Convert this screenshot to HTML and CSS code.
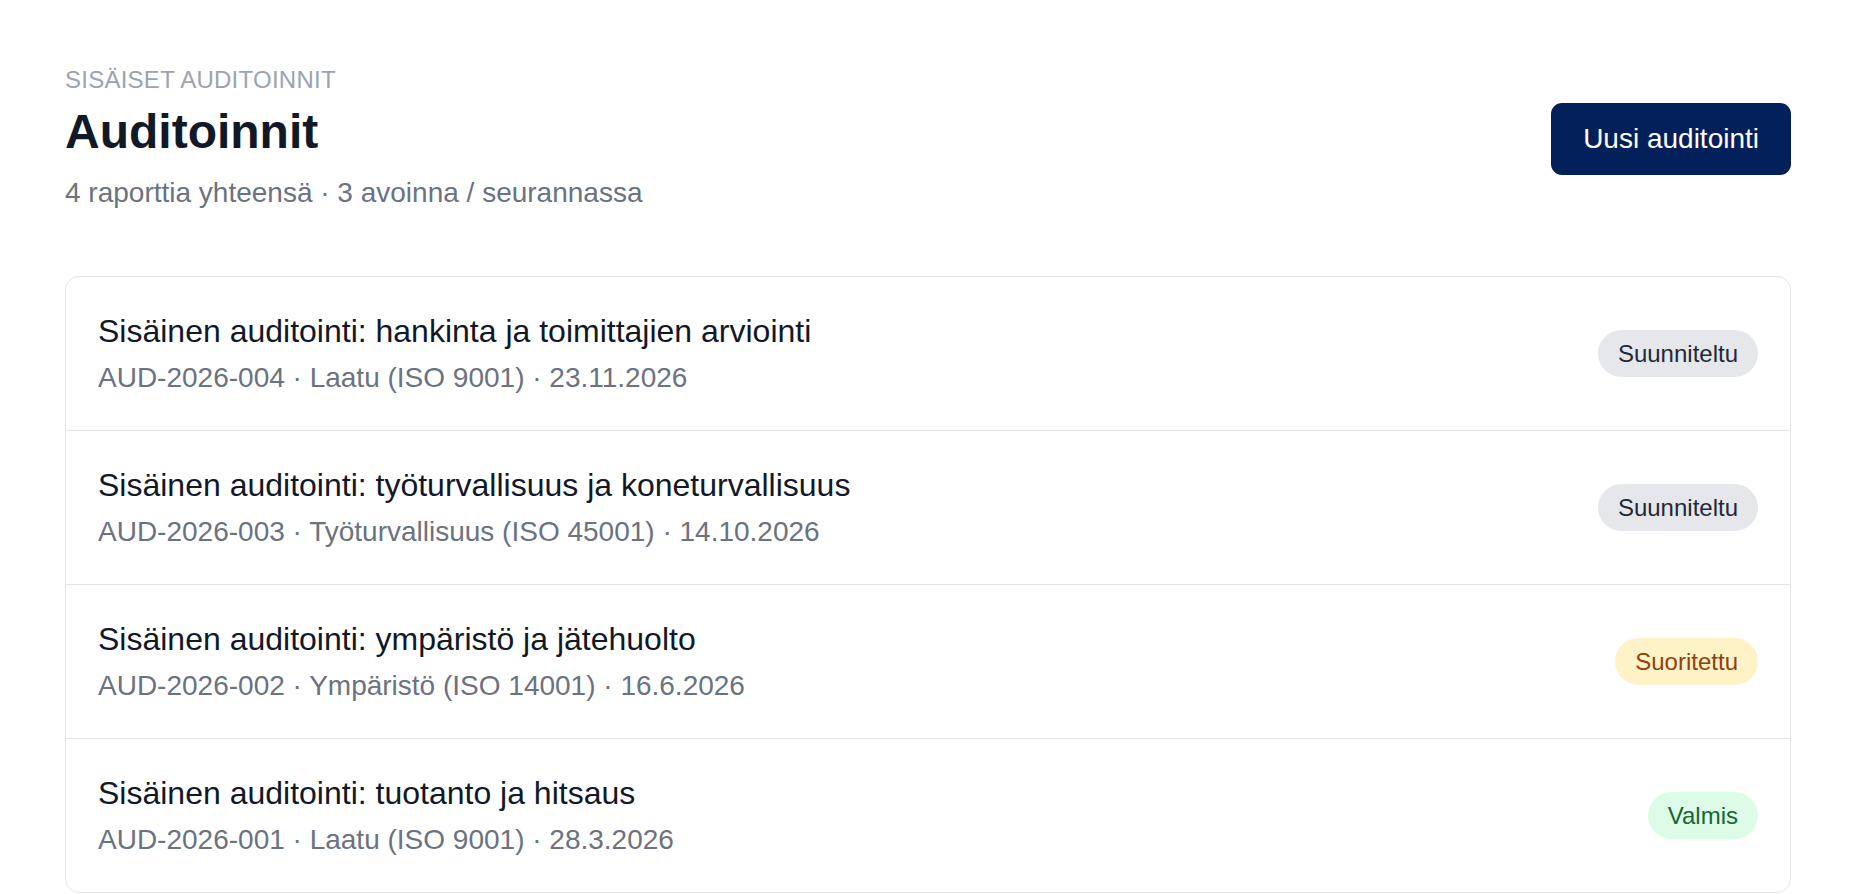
FILE: index.html
```html
<!DOCTYPE html>
<html lang="fi">
<head>
    <meta charset="UTF-8">
    <meta name="viewport" content="width=device-width, initial-scale=1.0">
    <title>Auditoinnit</title>
    <link rel="stylesheet" href="styles.css">
</head>
<body>
    <main class="page">
        <header class="page-header">
            <div class="heading">
                <p class="eyebrow">Sisäiset auditoinnit</p>
                <h1>Auditoinnit</h1>
                <p class="summary">4 raporttia yhteensä · 3 avoinna / seurannassa</p>
            </div>
            <button class="btn-primary" type="button">Uusi auditointi</button>
        </header>

        <ul class="audit-list">
            <li class="audit-item">
                <div class="audit-text">
                    <div class="audit-title">Sisäinen auditointi: hankinta ja toimittajien arviointi</div>
                    <div class="audit-meta">AUD-2026-004 · Laatu (ISO 9001) · 23.11.2026</div>
                </div>
                <span class="badge badge-planned">Suunniteltu</span>
            </li>
            <li class="audit-item">
                <div class="audit-text">
                    <div class="audit-title">Sisäinen auditointi: työturvallisuus ja koneturvallisuus</div>
                    <div class="audit-meta">AUD-2026-003 · Työturvallisuus (ISO 45001) · 14.10.2026</div>
                </div>
                <span class="badge badge-planned">Suunniteltu</span>
            </li>
            <li class="audit-item">
                <div class="audit-text">
                    <div class="audit-title">Sisäinen auditointi: ympäristö ja jätehuolto</div>
                    <div class="audit-meta">AUD-2026-002 · Ympäristö (ISO 14001) · 16.6.2026</div>
                </div>
                <span class="badge badge-done">Suoritettu</span>
            </li>
            <li class="audit-item">
                <div class="audit-text">
                    <div class="audit-title">Sisäinen auditointi: tuotanto ja hitsaus</div>
                    <div class="audit-meta">AUD-2026-001 · Laatu (ISO 9001) · 28.3.2026</div>
                </div>
                <span class="badge badge-ready">Valmis</span>
            </li>
        </ul>
    </main>
</body>
</html>
```

FILE: styles.css
```css
/* Global styles */
* {
    margin: 0;
    padding: 0;
    box-sizing: border-box;
}

body {
    background: #fff;
    color: #111827;
    font-family: "Liberation Sans", Arial, sans-serif;
}

.page {
    padding: 64px 65px 40px;
}

/* Header */
.page-header {
    display: flex;
    justify-content: space-between;
    align-items: center;
    margin-bottom: 63px;
}

.eyebrow {
    font-size: 24px;
    line-height: 32px;
    letter-spacing: 0.25px;
    text-transform: uppercase;
    color: #9ca3af;
}

h1 {
    margin-top: 8px;
    font-size: 48px;
    line-height: 56px;
    font-weight: bold;
    color: #111827;
}

.summary {
    margin-top: 13px;
    font-size: 28px;
    line-height: 40px;
    color: #6b7280;
}

.btn-primary {
    padding: 14px 32px;
    font-family: inherit;
    font-size: 28px;
    line-height: 44px;
    color: #fff;
    background: #04205a;
    border: none;
    border-radius: 11px;
    cursor: pointer;
}

/* List */
.audit-list {
    list-style: none;
    border: 1px solid #e3e5e9;
    border-radius: 14px;
}

.audit-item {
    display: flex;
    justify-content: space-between;
    align-items: center;
    padding: 32px;
    border-bottom: 1px solid #e3e5e9;
}

.audit-item:last-child {
    border-bottom: none;
}

.audit-title {
    font-size: 32px;
    line-height: 44px;
    color: #111827;
}

.audit-meta {
    margin-top: 5px;
    font-size: 28px;
    line-height: 40px;
    color: #6b7280;
}

.badge {
    padding: 7px 20px;
    font-size: 24px;
    line-height: 33px;
    border-radius: 999px;
    white-space: nowrap;
}

.badge-planned {
    background: #e5e7eb;
    color: #1f2937;
}

.badge-done {
    background: #fef3c7;
    color: #92400e;
}

.badge-ready {
    background: #dcfce7;
    color: #166534;
}
```
